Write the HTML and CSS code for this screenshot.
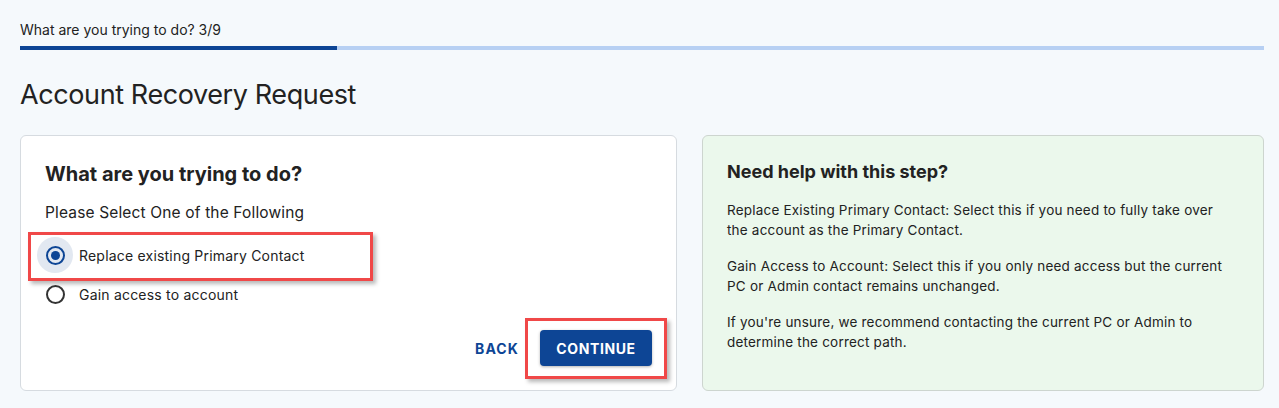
FILE: index.html
```html
<!DOCTYPE html>
<html lang="en">
<head>
<meta charset="utf-8">
<title>Account Recovery Request</title>
<link rel="stylesheet" href="styles.css">
</head>
<body>
<div class="page">
  <div class="progress">
    <div class="progress-label">What are you trying to do? 3/9</div>
    <div class="progress-track"><div class="progress-fill" style="width:25.5%"></div></div>
  </div>
  <h1 class="title">Account Recovery Request</h1>
  <div class="cards">
    <div class="card form-card">
      <h2 class="card-heading">What are you trying to do?</h2>
      <p class="prompt">Please Select One of the Following</p>
      <div class="options">
        <label class="option highlighted">
          <span class="radio-wrap checked"><span class="radio"></span></span>
          <span class="option-text">Replace existing Primary Contact</span>
        </label>
        <label class="option">
          <span class="radio-wrap"><span class="radio"></span></span>
          <span class="option-text">Gain access to account</span>
        </label>
      </div>
      <div class="actions">
        <button class="btn-text" type="button">BACK</button>
        <span class="btn-frame"><button class="btn-primary" type="button">CONTINUE</button></span>
      </div>
    </div>
    <div class="card help-card">
      <h2 class="help-heading">Need help with this step?</h2>
      <p class="help-text">Replace Existing Primary Contact: Select this if you need to fully take over the account as the Primary Contact.</p>
      <p class="help-text">Gain Access to Account: Select this if you only need access but the current PC or Admin contact remains unchanged.</p>
      <p class="help-text">If you're unsure, we recommend contacting the current PC or Admin to determine the correct path.</p>
    </div>
  </div>
</div>
</body>
</html>
```

FILE: styles.css
```css
* { box-sizing: border-box; }
html, body { margin: 0; padding: 0; }
body {
  background: #f5f9fc;
  font-family: Inter, "Noto Sans", "Liberation Sans", sans-serif;
  color: #222;
}
.page {
  padding: 22px 15px 0 20px;
}
.progress-label {
  font-size: 14px;
  line-height: 16px;
  color: #222;
}
.progress-track {
  margin-top: 8px;
  height: 4px;
  background: #b7d0f3;
}
.progress-fill {
  height: 4px;
  background: #0d4595;
}
.title {
  margin: 28px 0 0;
  font-size: 27px;
  line-height: 34px;
  font-weight: 400;
  letter-spacing: -0.4px;
  color: #222;
}
.cards {
  margin-top: 23px;
  display: grid;
  grid-template-columns: 657fr 562fr;
  gap: 25px;
}
.card {
  border: 1px solid #d6dbe0;
  border-radius: 6px;
  padding: 24px;
  height: 256px;
}
.form-card { background: #fff; }
.help-card { background: #ebf8ec; border-color: #cdd5cf; padding-right: 30px; }
.card-heading {
  margin: 2px 0 0;
  font-size: 20px;
  line-height: 24px;
  font-weight: 700;
  color: #222;
}
.prompt {
  margin: 17px 0 0;
  font-size: 15.5px;
  line-height: 20px;
  letter-spacing: 0.15px;
}
.options {
  margin-top: 14px;
  display: flex;
  flex-direction: column;
  gap: 3px;
}
.option {
  position: relative;
  display: flex;
  align-items: center;
  height: 36px;
  width: 330px;
  margin-left: -8px;
  font-size: 14px;
  letter-spacing: 0.2px;
}
.highlighted::after {
  content: "";
  position: absolute;
  left: -9px;
  top: -5px;
  width: 339px;
  height: 43px;
  border: 3px solid #f04848;
  box-shadow: 3px 3px 4px rgba(0, 0, 0, 0.28);
  pointer-events: none;
}
.radio-wrap {
  width: 36px;
  height: 36px;
  border-radius: 50%;
  display: flex;
  align-items: center;
  justify-content: center;
  flex: none;
}
.radio-wrap.checked { background: #e2e8f1; }
.radio {
  width: 19px;
  height: 19px;
  border: 2px solid #333;
  border-radius: 50%;
  display: flex;
  align-items: center;
  justify-content: center;
}
.checked .radio { border-color: #0d4595; }
.checked .radio::before {
  content: "";
  width: 9px;
  height: 9px;
  border-radius: 50%;
  background: #0d4595;
}
.option-text {
  margin-left: 6px;
  color: #222;
}
.actions {
  margin-top: 18px;
  display: flex;
  justify-content: flex-end;
  align-items: center;
}
.btn-text {
  background: none;
  border: none;
  padding: 0;
  margin-right: 21px;
  font-family: inherit;
  font-size: 14px;
  font-weight: 700;
  letter-spacing: 1.1px;
  color: #0d4595;
}
.btn-frame {
  position: relative;
  display: flex;
}
.btn-frame::after {
  content: "";
  position: absolute;
  left: -15px;
  top: -12px;
  right: -15px;
  bottom: -13px;
  border: 3px solid #f04848;
  box-shadow: 3px 3px 4px rgba(0, 0, 0, 0.28);
  pointer-events: none;
}
.btn-primary {
  width: 112px;
  height: 36px;
  border: none;
  border-radius: 4px;
  background: #0d4595;
  color: #fff;
  font-family: inherit;
  font-size: 14px;
  font-weight: 700;
  letter-spacing: 0.6px;
  box-shadow: 0 1px 3px rgba(0, 0, 0, 0.3);
}
.help-heading {
  margin: 0;
  font-size: 18px;
  line-height: 24px;
  font-weight: 700;
  color: #222;
}
.help-text {
  margin: 16px 0 0;
  font-size: 13.5px;
  line-height: 20px;
  letter-spacing: 0.2px;
  color: #222;
}
```
